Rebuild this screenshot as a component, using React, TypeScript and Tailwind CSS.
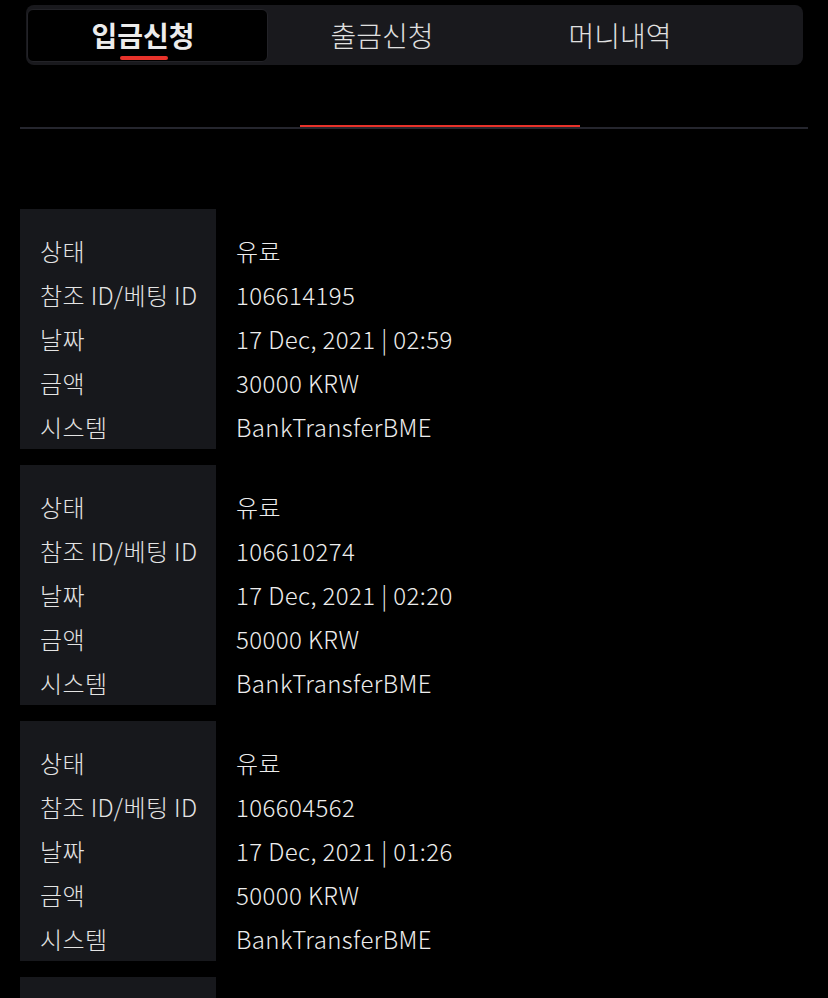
import { useState } from "react";

interface Deposit {
  status: string;
  refId: string;
  date: string;
  amount: string;
  system: string;
}

const deposits: Deposit[] = [
  { status: "유료", refId: "106614195", date: "17 Dec, 2021 | 02:59", amount: "30000 KRW", system: "BankTransferBME" },
  { status: "유료", refId: "106610274", date: "17 Dec, 2021 | 02:20", amount: "50000 KRW", system: "BankTransferBME" },
  { status: "유료", refId: "106604562", date: "17 Dec, 2021 | 01:26", amount: "50000 KRW", system: "BankTransferBME" },
  { status: "유료", refId: "106598311", date: "17 Dec, 2021 | 00:48", amount: "30000 KRW", system: "BankTransferBME" },
];

const labels = ["상태", "참조 ID/베팅 ID", "날짜", "금액", "시스템"];
const tabs = ["입금신청", "출금신청", "머니내역"];

export default function App() {
  const [active, setActive] = useState(0);

  return (
    <div
      className="min-h-screen bg-black text-[#e8e8e8]"
      style={{ fontFamily: '"Noto Sans CJK KR", "Noto Sans", sans-serif' }}
    >
      {/* TOP TABS */}
      <div className="pt-[5px] pl-[26px]">
        <div className="flex w-[777px] h-[60px] items-center px-[1px] rounded-lg bg-[#19191d]">
          {tabs.map((t, i) => (
            <button
              key={t}
              onClick={() => setActive(i)}
              className={
                i === active
                  ? "relative flex items-center justify-center w-[241px] h-[53px] pr-[9px] rounded-md bg-black border border-[#232328] text-[28px] font-bold text-[#ececec] cursor-pointer"
                  : "relative flex items-center justify-center w-[238px] h-[53px] pr-[10px] text-[28px] font-light text-[#e0e0e0] cursor-pointer"
              }
            >
              {t}
              {i === active && (
                <span className="absolute bottom-[1px] left-[92px] w-[48px] h-[4px] rounded-full bg-[#e8322a]" />
              )}
            </button>
          ))}
        </div>
      </div>

      {/* SUB INDICATOR */}
      <div className="mx-[20px] mt-[60px]">
        <div className="ml-[280px] w-[280px] h-[2px] bg-[#e8322a]" />
        <div className="h-[2px] bg-[#25262e]" />
      </div>

      {/* DEPOSIT LIST */}
      <div className="mx-[20px] mt-[80px] flex flex-col gap-[16px]">
        {deposits.map((d) => {
          const values = [d.status, d.refId, d.date, d.amount, d.system];
          return (
            <div key={d.refId} className="flex">
              <div className="w-[196px] bg-[#17181c] pl-[20px] pt-[20px] text-[24px] font-light tracking-[0.4px] text-[#e4e4e4]">
                {labels.map((l) => (
                  <div key={l} className="h-[44px] flex items-center whitespace-nowrap">
                    {l}
                  </div>
                ))}
              </div>
              <div className="pl-[20px] pt-[20px] text-[24px] font-light tracking-[0.4px] text-[#ededed]">
                {values.map((v, i) => (
                  <div key={i} className="h-[44px] flex items-center whitespace-nowrap">
                    {v}
                  </div>
                ))}
              </div>
            </div>
          );
        })}
      </div>
    </div>
  );
}
